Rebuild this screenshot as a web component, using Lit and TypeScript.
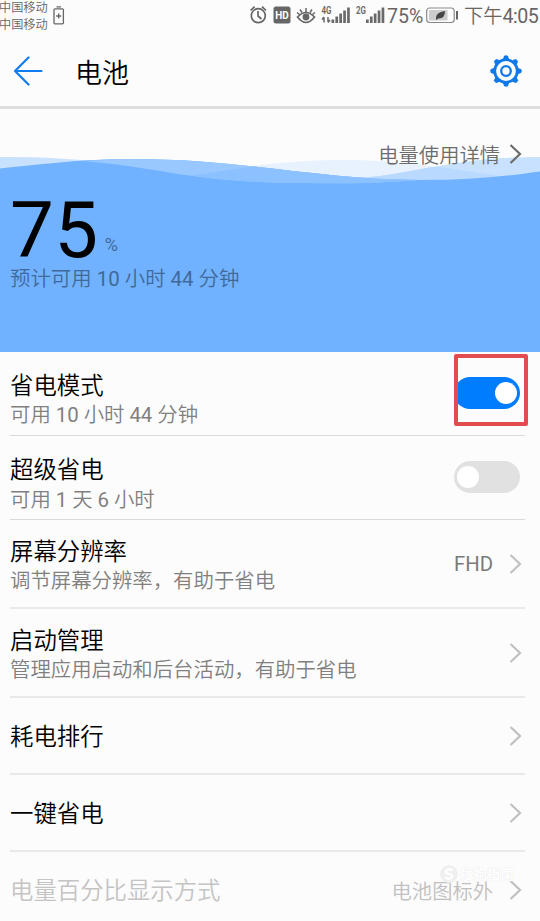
import { LitElement, html, css, svg, nothing } from "lit";
import { customElement } from "lit/decorators.js";

interface Row {
  title: string;
  sub?: string;
  kind: "switch" | "link";
  on?: boolean;
  value?: string;
  disabled?: boolean;
  size: string;
}

const rows: Row[] = [
  { title: "省电模式", sub: "可用 10 小时 44 分钟", kind: "switch", on: true, size: "r1" },
  { title: "超级省电", sub: "可用 1 天 6 小时", kind: "switch", on: false, size: "r2" },
  { title: "屏幕分辨率", sub: "调节屏幕分辨率，有助于省电", kind: "link", value: "FHD", size: "r3" },
  { title: "启动管理", sub: "管理应用启动和后台活动，有助于省电", kind: "link", size: "r4" },
  { title: "耗电排行", kind: "link", size: "single" },
  { title: "一键省电", kind: "link", size: "single" },
  { title: "电量百分比显示方式", kind: "link", value: "电池图标外", disabled: true, size: "single" },
];

// Digits and Latin letters are set a step heavier than the Chinese text around them.
const mixed = (text: string) =>
  text.split(/([0-9A-Za-z:]+)/).map((part, i) => (i % 2 ? html`<span class="latin">${part}</span>` : part));

const chevron = html`<svg class="chev" width="13" height="22" viewBox="0 0 13 22">
  <path d="M1.5 2 L11 11 L1.5 20" fill="none" stroke="currentColor" stroke-width="2.2" />
</svg>`;

const bars = [0, 1, 2, 3, 4].map(
  (i) => svg`<rect x=${i * 3.9} y=${13.5 - i * 3} width="2.7" height=${3.5 + i * 3} fill="#6a6a6a" />`
);

@customElement("app-root")
export class AppRoot extends LitElement {
  static styles = css`
    :host {
      display: block;
      width: 540px;
      height: 921px;
      overflow: hidden;
      position: relative;
      background: #fcfcfc;
      color: #000;
      font-family: Roboto, "Noto Sans CJK SC", sans-serif;
      font-weight: 350;
    }
    svg { display: block; flex: none; }
    .latin { font-weight: 400; }
    .status { display: flex; height: 32px; color: #666; white-space: nowrap; }
    .carriers { font-size: 12.2px; line-height: 17px; width: 54px; margin-left: -1px; }
    .status .lowbat { margin-top: 6px; }
    .tray { display: flex; margin-left: auto; }
    .pct { font-size: 19.5px; line-height: 33px; width: 39px; font-weight: 400; }
    .clock { font-size: 19.2px; line-height: 33px; width: 76px; }
    .clock .latin { font-size: 19.6px; letter-spacing: -0.5px; }
    .bar { display: flex; align-items: center; padding: 4px 18px 0 13px; border-bottom: 3px solid #dedede; box-sizing: border-box; height: 77px; }
    .bar h1 { margin: 0; flex: 1; font-size: 27px; line-height: 40px; font-weight: 350; padding-left: 31px; padding-top: 5px; }
    .hero { height: 243px; position: relative; }
    .waves { position: absolute; left: 0; top: 0; }
    .over { position: relative; }
    .detail { display: flex; justify-content: flex-end; align-items: center; height: 30px; padding: 30px 18px 0 0; color: #6c6c6c; font-size: 20.3px; }
    .detail span { margin-top: -1px; }
    .detail .chev { margin-left: 9px; }
    .level { display: flex; align-items: flex-end; padding-left: 10px; height: 88px; margin-top: 5px; }
    .level b { font-weight: 400; font-size: 78px; line-height: 60px; letter-spacing: 0.5px; margin-bottom: 1px; }
    .level i { font-style: normal; font-size: 18px; line-height: 20px; color: #416998; padding-left: 6px; font-weight: 400; margin-bottom: 7px; }
    .remain { padding-left: 10px; font-size: 20.45px; line-height: 26px; margin-top: 4px; color: #416998; }
    .row { display: flex; box-sizing: border-box; margin: 0 15px 0 10px; border-bottom: 2px solid #e9e9e9; }
    .r1, .r2 { height: 84px; padding-top: 17px; border-bottom: 1px solid #dadada; }
    .r3, .r4 { height: 89px; padding-top: 15px; }
    .single { height: 77px; padding-top: 22px; }
    .text { flex: 1; }
    .t { font-size: 23.4px; line-height: 34px; white-space: nowrap; }
    .s { font-size: 20.4px; line-height: 26px; margin-top: -1px; color: #808080; white-space: nowrap; }
    .r2 .s { margin-top: 0; }
    .end { display: flex; align-items: center; color: #c0c0c0; height: 32px; margin-right: 3px; }
    .r3 .end, .r4 .end { height: 58px; }
    .val { color: #7a7a7a; font-size: 20.3px; margin-right: 16px; }
    .disabled .t { color: #c4c4c4; }
    .disabled .val { color: #c0c0c0; }
    .switch { width: 66px; height: 32px; border-radius: 16px; background: #e1e1e1; padding: 5px 3px; box-sizing: border-box; display: flex; margin-right: 2px; }
    .r1 .end, .r2 .end { height: 48px; }
    .knob { width: 22px; height: 22px; border-radius: 50%; background: #fff; }
    .on { background: #007dff; justify-content: flex-end; }
    .frame { position: absolute; left: 454px; top: 354px; width: 74px; height: 72px; box-sizing: border-box; border: 4px solid #e24c50; border-radius: 2px; }
    .mark { position: absolute; left: 439px; top: 864px; display: flex; align-items: center; gap: 1px; color: #fff; font-size: 13.5px; line-height: 16px; font-weight: 700; text-shadow: 0 0 1px #ddd; }
  `;

  private row(r: Row) {
    return html`<div class="row ${r.size} ${r.disabled ? "disabled" : ""}">
      <div class="text">
        <div class="t">${r.title}</div>
        ${r.sub ? html`<div class="s">${mixed(r.sub)}</div>` : nothing}
      </div>
      <div class="end">
        ${r.kind === "switch"
          ? html`<div class="switch ${r.on ? "on" : ""}"><div class="knob"></div></div>`
          : html`${r.value ? html`<span class="val">${mixed(r.value)}</span>` : nothing}${chevron}`}
      </div>
    </div>`;
  }

  render() {
    return html`
      <div class="status">
        <div class="carriers"><div>中国移动</div><div>中国移动</div></div>
        <svg class="lowbat" width="12" height="19" viewBox="0 0 12 19" fill="none" stroke="#666" stroke-width="1.3">
          <rect x="1" y="2.8" width="9.4" height="15" rx="1" /><path d="M3.5 .8h4.4M3.2 10h5M5.7 7.5v5" />
        </svg>
        <div class="tray">
          <svg width="137" height="32" viewBox="250 0 137 32">
            <g fill="none" stroke="#666" stroke-width="1.7">
              <circle cx="258.3" cy="15.7" r="7" />
              <path d="M258 11v5l3.5 3M250.6 10.5l4-3.8M262 6.7l4 3.8" />
              <path d="M297.5 17q8.5-9 17 0q-8.5 11-17 0z" />
              <path d="M306 8v4M300 9.5l2 3M312 9.5l-2 3M297 12.5l2.5 2M315 12.5l-2.5 2" stroke-width="1.5" />
            </g>
            <circle cx="306" cy="17" r="3.4" fill="#666" />
            <rect x="273.5" y="6.5" width="17" height="17" rx="2.5" fill="#666" />
            <text x="282" y="19" text-anchor="middle" font-size="11.5" font-weight="700" fill="#fff" textLength="13.5" lengthAdjust="spacingAndGlyphs">HD</text>
            <g font-size="10" font-weight="600" fill="#666">
              <text x="321.5" y="14" textLength="10" lengthAdjust="spacingAndGlyphs">4G</text>
              <text x="356" y="14" textLength="10" lengthAdjust="spacingAndGlyphs">2G</text>
            </g>
            <path d="M324 22.5v-5M322 19.5l2-2.5M328 17v5M330 20l-2 2.5" stroke="#666" stroke-width="1.5" fill="none" />
            <g transform="translate(331.5 6)">${bars}</g>
            <g transform="translate(366 6)">${bars}</g>
          </svg>
          <div class="pct">75%</div>
          <svg width="38" height="32" viewBox="426 0 38 32">
            <rect x="426.7" y="8" width="27.5" height="14.5" rx="3" fill="#fff" stroke="#888" stroke-width="1.2" />
            <rect x="429" y="10" width="18.5" height="10.5" fill="#ccc" />
            <rect x="456" y="11" width="2" height="8.5" fill="#666" />
            <path d="M436 19q-.5-7 9-8q0 8-7 7.5l-1.5 1.5z" fill="#444" />
          </svg>
          <div class="clock">${mixed("下午4:05")}</div>
        </div>
      </div>
      <div class="bar">
        <svg width="31" height="30" viewBox="0 0 31 30" fill="none" stroke="#0f7df0" stroke-width="2.2" stroke-linecap="round" stroke-linejoin="round">
          <path d="M15.5 1.5L2 15L15.5 28.5M2 15H28.5" />
        </svg>
        <h1>电池</h1>
        <svg width="32" height="32" viewBox="-16 -16 32 32">
          <g fill="none" stroke="#1079ea">
            <circle r="11.3" stroke-width="2.8" /><circle r="4.8" stroke-width="2.3" />
          </g>
          <g fill="#1079ea">
            ${[0, 45, 90, 135, 180, 225, 270, 315].map(
              (a) => svg`<path transform="rotate(${a})" d="M-3-12L-2-15Q0-16.5 2-15L3-12z" />`
            )}
          </g>
        </svg>
      </div>
      <div class="hero">
        <svg class="waves" width="540" height="243" viewBox="0 109 540 243">
          <defs>
            <clipPath id="band"><path d="M85 161.2C110 159.5 120 159 135 159C240 159 320 180 420 180C350 185 320 183 280 182.5C190 181 150 166 85 161.2z" /></clipPath>
            <clipPath id="back"><path d="M0 157C90 157 120 165 180 174S300 186 370 177C430 170 460 157 540 157V352H0z" /></clipPath>
          </defs>
          <path fill="#e8f2fe" d="M200 174C240 167 290 160 340 160C410 160 450 169 540 182V352H200z" />
          <path fill="#c8e1ff" d="M0 157C90 157 120 165 180 174S300 186 370 177C430 170 460 157 540 157V352H0z" />
          <path fill="#b9d9ff" clip-path="url(#back)" d="M200 174C240 167 290 160 340 160C410 160 450 169 540 182V352H200z" />
          <path fill="#70b2ff" d="M0 168.5C60 162 90 159 135 159C240 159 320 180 420 180C470 180 500 177 540 171.5V352H0z" />
          <g clip-path="url(#band)">
            <path fill="#98c8ff" d="M80 150H430V190H80z" />
            <path fill="#8cc1ff" d="M170 178C230 172 270 160 340 160H430V190H170z" />
          </g>
        </svg>
        <div class="over">
          <div class="detail"><span>电量使用详情</span>${chevron}</div>
          <div class="level"><b>75</b><i>%</i></div>
          <div class="remain">${mixed("预计可用 10 小时 44 分钟")}</div>
        </div>
      </div>
      ${rows.map((r) => this.row(r))}
      <div class="frame"></div>
      <div class="mark">
        <svg width="20" height="20" viewBox="0 0 20 20"><circle cx="10" cy="10" r="9" fill="#f0f0f0" /><path d="M13.5 6.5Q10 4 7.5 6.5T10 10T12.5 13.5T6.5 13.5" fill="none" stroke="#fff" stroke-width="2.2" /></svg>
        <span>搜狗指南</span>
      </div>
    `;
  }
}
